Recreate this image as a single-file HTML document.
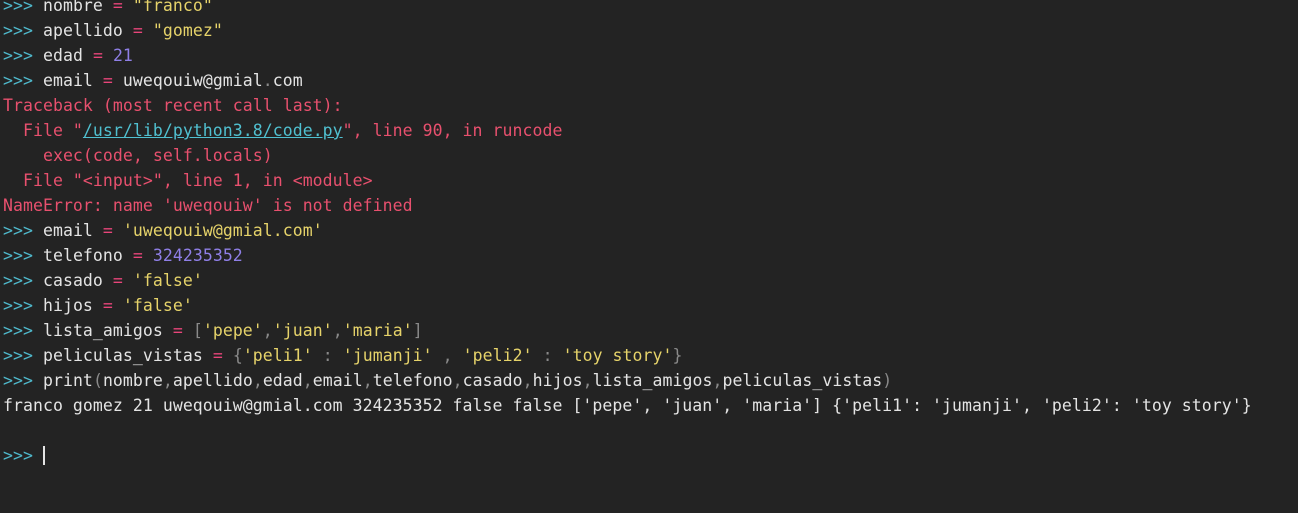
<!DOCTYPE html><html><head><style>
html,body{margin:0;padding:0;background:#232323;width:1298px;height:513px;overflow:hidden}
pre{margin:0;position:absolute;top:-7px;left:3px;font-family:"DejaVu Sans Mono","Liberation Mono",monospace;font-size:16.5px;letter-spacing:0.056px;line-height:25px;color:#e4e4e4}
.p{color:#4fb9cc}.o{color:#e8457a}.s{color:#e6d36a}.n{color:#8f7fe6}.g{color:#8a8a8a}.e{color:#e8506e}.u{color:#50c0d0;text-decoration:underline}
.c{display:inline-block;width:2px;height:19px;background:#e4e4e4;vertical-align:-4px}
</style></head><body><pre><span class="p">&gt;&gt;&gt;</span> nombre <span class="o">=</span> <span class="s">"franco"</span>
<span class="p">&gt;&gt;&gt;</span> apellido <span class="o">=</span> <span class="s">"gomez"</span>
<span class="p">&gt;&gt;&gt;</span> edad <span class="o">=</span> <span class="n">21</span>
<span class="p">&gt;&gt;&gt;</span> email <span class="o">=</span> uweqouiw@gmial<span class="g">.</span>com
<span class="e">Traceback (most recent call last):</span>
<span class="e">  File "<span class="u">/usr/lib/python3.8/code.py</span>", line 90, in runcode</span>
<span class="e">    exec(code, self.locals)</span>
<span class="e">  File "&lt;input&gt;", line 1, in &lt;module&gt;</span>
<span class="e">NameError: name 'uweqouiw' is not defined</span>
<span class="p">&gt;&gt;&gt;</span> email <span class="o">=</span> <span class="s">'uweqouiw@gmial.com'</span>
<span class="p">&gt;&gt;&gt;</span> telefono <span class="o">=</span> <span class="n">324235352</span>
<span class="p">&gt;&gt;&gt;</span> casado <span class="o">=</span> <span class="s">'false'</span>
<span class="p">&gt;&gt;&gt;</span> hijos <span class="o">=</span> <span class="s">'false'</span>
<span class="p">&gt;&gt;&gt;</span> lista_amigos <span class="o">=</span> <span class="g">[</span><span class="s">'pepe'</span><span class="g">,</span><span class="s">'juan'</span><span class="g">,</span><span class="s">'maria'</span><span class="g">]</span>
<span class="p">&gt;&gt;&gt;</span> peliculas_vistas <span class="o">=</span> <span class="g">{</span><span class="s">'peli1'</span> <span class="g">:</span> <span class="s">'jumanji'</span> <span class="g">,</span> <span class="s">'peli2'</span> <span class="g">:</span> <span class="s">'toy story'</span><span class="g">}</span>
<span class="p">&gt;&gt;&gt;</span> print<span class="g">(</span>nombre<span class="g">,</span>apellido<span class="g">,</span>edad<span class="g">,</span>email<span class="g">,</span>telefono<span class="g">,</span>casado<span class="g">,</span>hijos<span class="g">,</span>lista_amigos<span class="g">,</span>peliculas_vistas<span class="g">)</span>
franco gomez 21 uweqouiw@gmial.com 324235352 false false ['pepe', 'juan', 'maria'] {'peli1': 'jumanji', 'peli2': 'toy story'}

<span class="p">&gt;&gt;&gt;</span> <span class="c"></span>
</pre></body></html>
